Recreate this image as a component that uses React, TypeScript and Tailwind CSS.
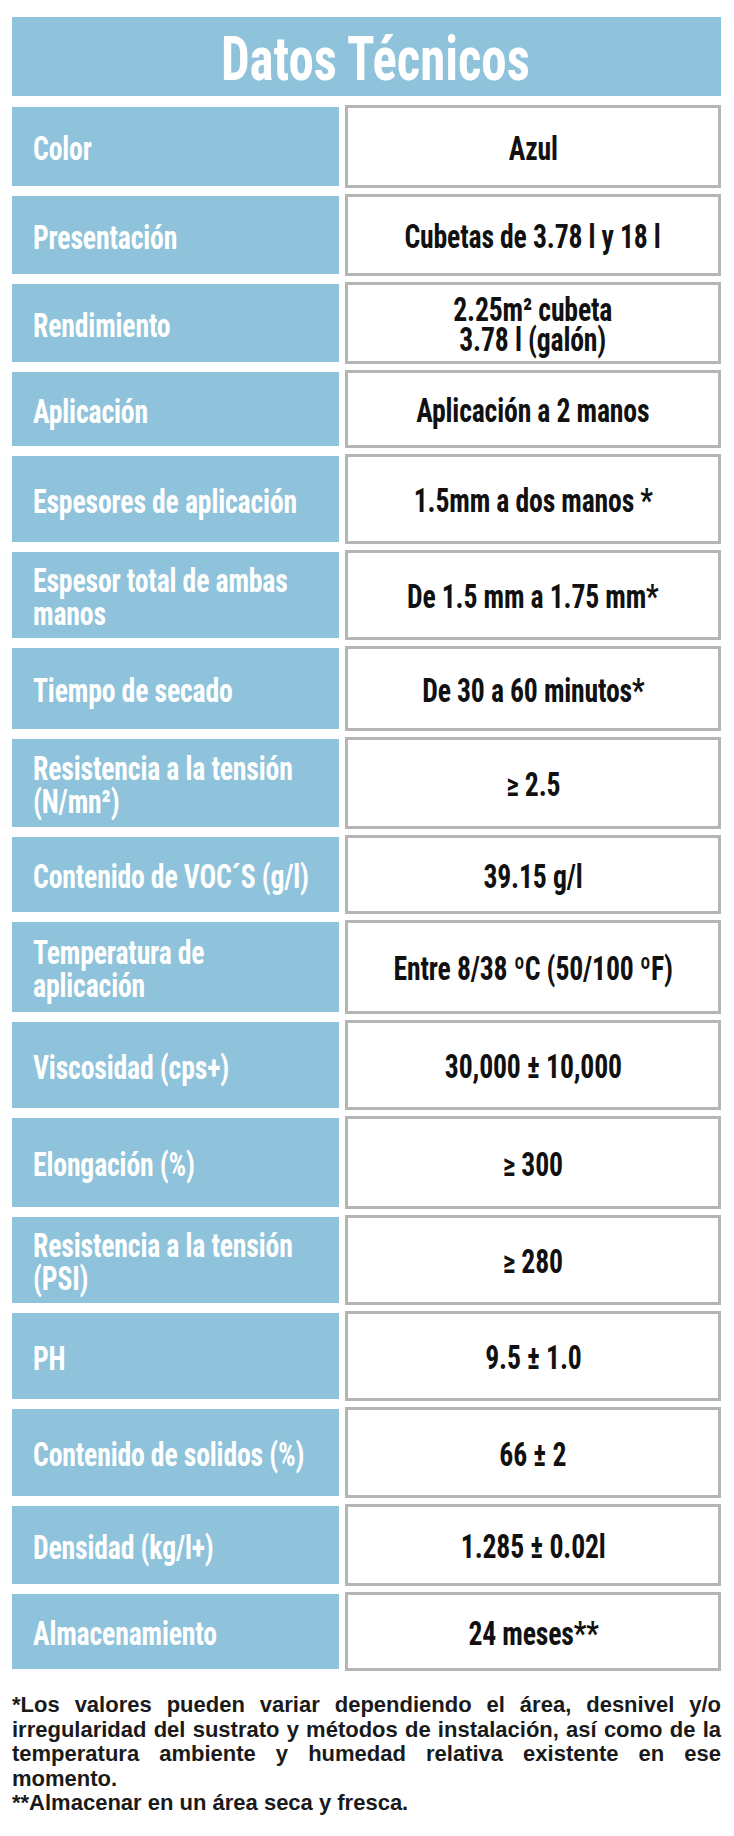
const rows = [
  { label: ["Color"], value: ["Azul"], h: "h-[79px]" },
  { label: ["Presentación"], value: ["Cubetas de 3.78 l y 18 l"], h: "h-[78px]" },
  { label: ["Rendimiento"], value: ["2.25m² cubeta", "3.78 l (galón)"], h: "h-[78px]" },
  { label: ["Aplicación"], value: ["Aplicación a 2 manos"], h: "h-[74px]" },
  { label: ["Espesores de aplicación"], value: ["1.5mm a dos manos *"], h: "h-[86px]" },
  { label: ["Espesor total de ambas", "manos"], value: ["De 1.5 mm a 1.75 mm*"], h: "h-[86px]" },
  { label: ["Tiempo de secado"], value: ["De 30 a 60 minutos*"], h: "h-[81px]" },
  { label: ["Resistencia a la tensión", "(N/mn²)"], value: ["≥ 2.5"], h: "h-[88px]" },
  { label: ["Contenido de VOC´S (g/l)"], value: ["39.15 g/l"], h: "h-[75px]" },
  { label: ["Temperatura de", "aplicación"], value: ["Entre 8/38 ºC (50/100 ºF)"], h: "h-[90px]" },
  { label: ["Viscosidad (cps+)"], value: ["30,000 ± 10,000"], h: "h-[86px]" },
  { label: ["Elongación (%)"], value: ["≥ 300"], h: "h-[89px]" },
  { label: ["Resistencia a la tensión", "(PSI)"], value: ["≥ 280"], h: "h-[86px]" },
  { label: ["PH"], value: ["9.5 ± 1.0"], h: "h-[86px]" },
  { label: ["Contenido de solidos (%)"], value: ["66 ± 2"], h: "h-[87px]" },
  { label: ["Densidad (kg/l+)"], value: ["1.285 ± 0.02l"], h: "h-[78px]" },
  { label: ["Almacenamiento"], value: ["24 meses**"], h: "h-[75px]" },
];

// condensed display face (the original uses a narrow poster font)
const condensed = "font-['Roboto_Condensed','Open_Sans',sans-serif] [font-stretch:condensed] font-bold";

const Row = ({ label, value, h }: { label: string[]; value: string[]; h: string }) => (
  <div className={`flex gap-[6px] ${h}`}>
    {/* label cell */}
    <div className="w-[327px] shrink-0 bg-[#8ec3db] flex items-center pl-[21px] pt-1">
      <span
        className={`${condensed} inline-block origin-left scale-x-[0.84] whitespace-nowrap text-[33px] leading-[33px] tracking-[-0.2px] text-white`}
      >
        {label.map((l, i) => (
          <span key={i} className="block">
            {l}
          </span>
        ))}
      </span>
    </div>
    {/* value cell */}
    <div className="flex-1 min-w-0 -my-0.5 border-[3px] border-[#b5b5b5] bg-white flex items-center justify-center pt-1">
      <span
        className={`${condensed} inline-block scale-x-[0.84] whitespace-nowrap text-center text-[33px] leading-[30px] tracking-[-0.2px] text-[#111]`}
      >
        {value.map((v, i) => (
          <span key={i} className="block">
            {v}
          </span>
        ))}
      </span>
    </div>
  </div>
);

export default function App() {
  return (
    <div className="min-h-[1836px] bg-white pt-[17px]">
      <div className="ml-[12px] w-[709px]">
        <div className="h-[79px] bg-[#8ec3db] flex items-center justify-center pt-1">
          <h1 className={`${condensed} ml-[18px] inline-block scale-x-[0.82] text-[62px] leading-none text-white`}>
            Datos Técnicos
          </h1>
        </div>

        <div className="mt-[11px] flex flex-col gap-[10px]">
          {rows.map((r, i) => (
            <Row key={i} {...r} />
          ))}
        </div>

        <div className="mt-[24px] font-['Liberation_Sans',Arial,sans-serif] font-bold text-[22px] leading-[24.5px] text-[#1a1a1a]">
          <p className="text-justify">
            *Los valores pueden variar dependiendo el área, desnivel y/o irregularidad del sustrato y métodos de
            instalación, así como de la temperatura ambiente y humedad relativa existente en ese momento.
          </p>
          <p>**Almacenar en un área seca y fresca.</p>
        </div>
      </div>
    </div>
  );
}
